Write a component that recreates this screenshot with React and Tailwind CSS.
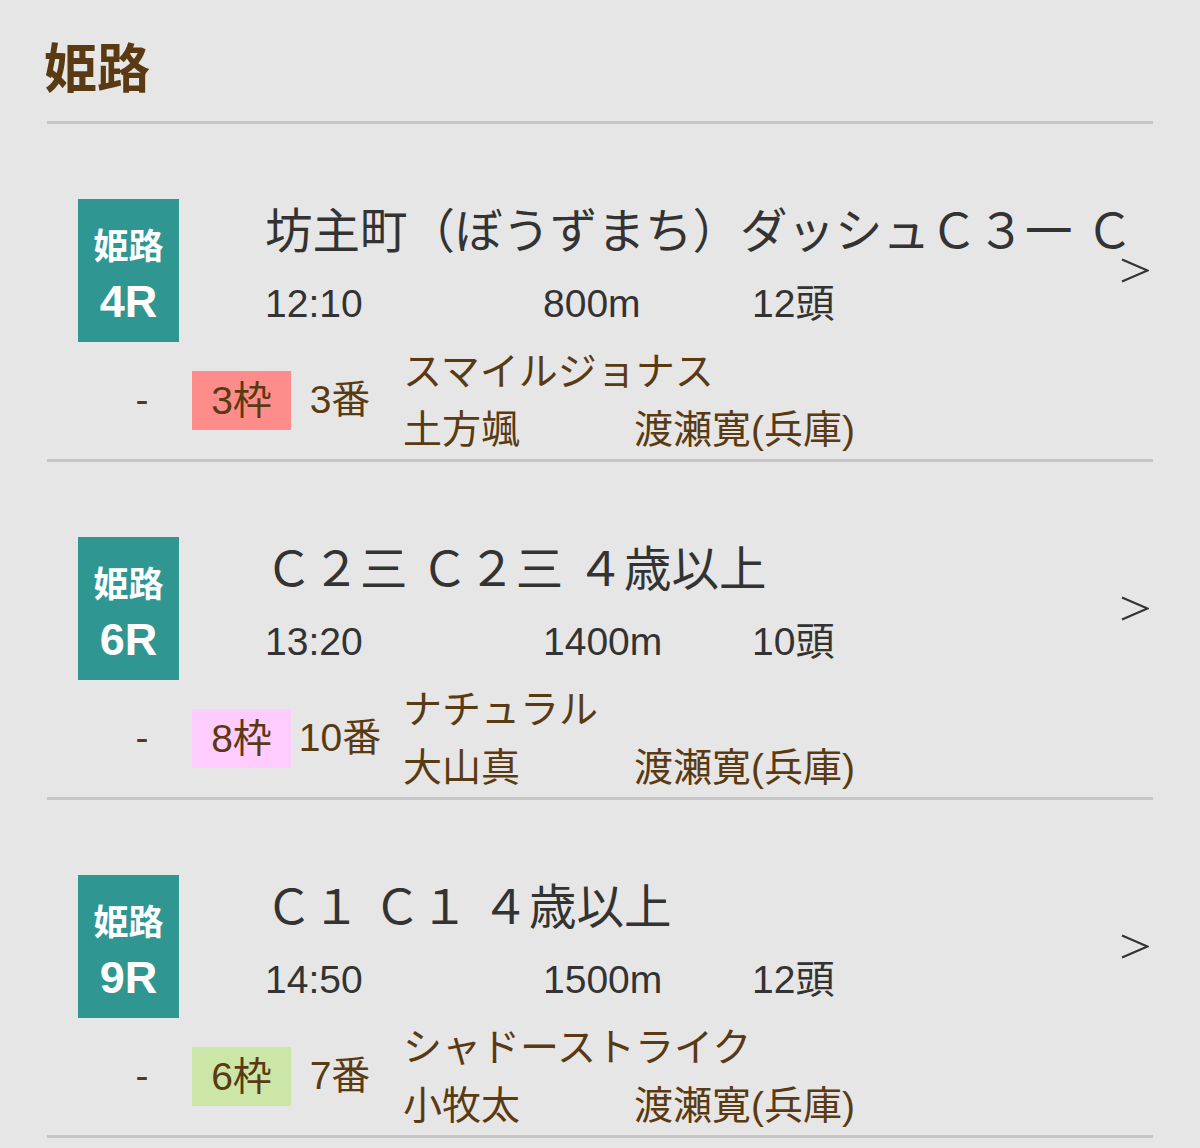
import React from 'react';

const races = [
  {
    no: '4R',
    title: '坊主町（ぼうずまち）ダッシュＣ３一 Ｃ',
    time: '12:10',
    dist: '800m',
    heads: '12頭',
    waku: '3枠',
    wakuBg: 'bg-[#fd8c8a]',
    num: '3番',
    horse: 'スマイルジョナス',
    jockey: '土方颯',
    trainer: '渡瀬寛(兵庫)',
  },
  {
    no: '6R',
    title: 'Ｃ２三 Ｃ２三 ４歳以上',
    time: '13:20',
    dist: '1400m',
    heads: '10頭',
    waku: '8枠',
    wakuBg: 'bg-[#ffccff]',
    num: '10番',
    horse: 'ナチュラル',
    jockey: '大山真',
    trainer: '渡瀬寛(兵庫)',
  },
  {
    no: '9R',
    title: 'Ｃ１ Ｃ１ ４歳以上',
    time: '14:50',
    dist: '1500m',
    heads: '12頭',
    waku: '6枠',
    wakuBg: 'bg-[#cbe6a6]',
    num: '7番',
    horse: 'シャドーストライク',
    jockey: '小牧太',
    trainer: '渡瀬寛(兵庫)',
  },
];

const Chevron = () => (
  <svg width="28" height="25" viewBox="0 0 28 25" className="shrink-0">
    <polyline points="1,1.5 26.5,12.5 1,23.5" fill="none" stroke="#333" strokeWidth="2.2" />
  </svg>
);

const RaceCard = ({ r }) => {
  return (
    <div className="border-b-[3px] border-[#c6c6c6] pt-[75px]">
      {/* top: badge + race info */}
      <div className="flex items-center pl-[31px]">
        <div className="w-[101px] h-[143px] bg-[#2f9692] text-white flex flex-col items-center pt-[27px] shrink-0">
          <div className="h-[41px] leading-[41px] text-[35px] font-bold">姫路</div>
          <div className="mt-[7px] h-[56px] leading-[56px] text-[45px] font-bold">{r.no}</div>
        </div>
        <div className="ml-[86px] w-[856px] h-[143px] text-[#333]">
          <div className="h-[66px] leading-[66px] text-[47.5px] whitespace-nowrap">
            {r.title}
          </div>
          <div className="flex h-[77px] leading-[77px] text-[39px]">
            <span className="w-[278px]">{r.time}</span>
            <span className="w-[209px]">{r.dist}</span>
            <span>{r.heads}</span>
          </div>
        </div>
        <Chevron />
      </div>

      {/* bottom: pick */}
      <div className="flex items-center pl-[45px] h-[117px] text-[39px] text-[#5a3a12]">
        <span className="w-[100px] text-center">-</span>
        <span className={`w-[99px] h-[59px] leading-[59px] text-center ${r.wakuBg}`}>{r.waku}</span>
        <span className="w-[98px] text-center">{r.num}</span>
        <div className="ml-[14px] flex flex-col">
          <div className="h-[58px] leading-[58px]">{r.horse}</div>
          <div className="flex h-[58px] leading-[58px]">
            <span className="w-[231px]">{r.jockey}</span>
            <span>{r.trainer}</span>
          </div>
        </div>
      </div>
    </div>
  );
};

const App = () => {
  return (
    <div
      className="min-h-screen bg-[#e6e6e6]"
      style={{ fontFamily: '"Liberation Sans", "Noto Sans CJK JP", sans-serif' }}
    >
      <div className="mx-[47px]">
        <div className="border-b-[3px] border-[#c6c6c6] pt-[44px] pb-[25px]">
          <h1 className="-ml-[3px] h-[52px] leading-[52px] text-[53px] font-bold text-[#5a3a12]">姫路</h1>
        </div>
        {races.map((r) => (
          <RaceCard key={r.no} r={r} />
        ))}
      </div>
    </div>
  );
};

export default App;
